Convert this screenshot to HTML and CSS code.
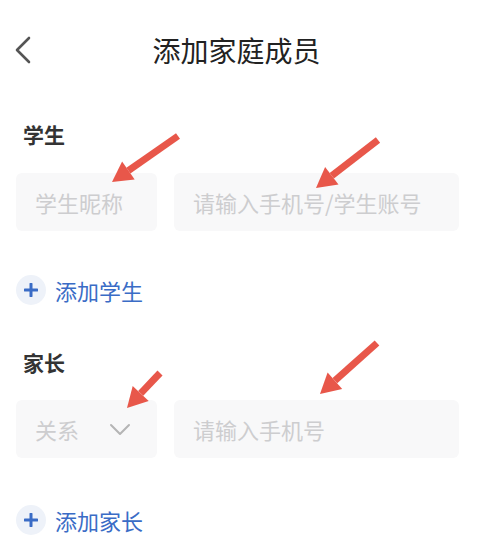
FILE: index.html
```
<!DOCTYPE html>
<html lang="zh-CN">
<head>
<meta charset="utf-8">
<title>添加家庭成员</title>
<link rel="stylesheet" href="styles.css">
</head>
<body>
<div class="page">
  <header class="header">
    <span class="back">
      <svg width="18" height="28" viewBox="0 0 18 28"><polyline points="15,2 3,14 15,26" fill="none" stroke="#555" stroke-width="2.6" stroke-linecap="round" stroke-linejoin="round"/></svg>
    </span>
    <h1 class="title">添加家庭成员</h1>
  </header>

  <section class="section">
    <h2 class="label">学生</h2>
    <div class="row">
      <input class="field field-short" type="text" placeholder="学生昵称">
      <input class="field field-long" type="text" placeholder="请输入手机号/学生账号">
    </div>
    <div class="add">
      <span class="add-icon"><svg width="14" height="14" viewBox="0 0 14 14"><path d="M7 1v12M1 7h12" stroke="#3a6cc6" stroke-width="3" stroke-linecap="round"/></svg></span>
      <span class="add-text">添加学生</span>
    </div>
  </section>

  <section class="section section-parent">
    <h2 class="label">家长</h2>
    <div class="row">
      <div class="field field-short select">
        <span class="ph">关系</span>
        <svg width="22" height="13" viewBox="0 0 22 13"><polyline points="2,2 11,11 20,2" fill="none" stroke="#b5b5b5" stroke-width="2" stroke-linecap="round" stroke-linejoin="round"/></svg>
      </div>
      <input class="field field-long" type="text" placeholder="请输入手机号">
    </div>
    <div class="add add-parent">
      <span class="add-icon"><svg width="14" height="14" viewBox="0 0 14 14"><path d="M7 1v12M1 7h12" stroke="#3a6cc6" stroke-width="3" stroke-linecap="round"/></svg></span>
      <span class="add-text">添加家长</span>
    </div>
  </section>

  <svg class="arrows" width="479" height="550" viewBox="0 0 479 550">
    <g stroke="#e8574a" stroke-width="7" fill="none">
      <line x1="178" y1="136" x2="128.4" y2="170.6"/>
      <line x1="378" y1="140" x2="331.8" y2="175.8"/>
      <line x1="160" y1="373" x2="140.7" y2="393.4"/>
      <line x1="377" y1="343" x2="334.9" y2="380.7"/>
    </g>
    <g fill="#e8574a">
      <polygon points="112,182 134.7,179.6 122.1,161.6"/>
      <polygon points="316,188 338.5,184.5 325.1,167.1"/>
      <polygon points="127,408 148.7,401 132.7,385.9"/>
      <polygon points="320,394 342.2,388.9 327.6,372.5"/>
    </g>
  </svg>
</div>
</body>
</html>
```
FILE: styles.css
```
* { box-sizing: border-box; }
html, body { margin: 0; padding: 0; background: #fff; }
body {
  font-family: "Noto Sans CJK SC", "Noto Sans", sans-serif;
  width: 479px;
  height: 550px;
  overflow: hidden;
}
.page { position: relative; height: 550px; }
.header {
  height: 100px;
  display: flex;
  align-items: center;
  justify-content: center;
  position: relative;
}
.back {
  position: absolute;
  left: 14px;
  top: 36px;
  display: flex;
}
.title {
  margin: 0;
  font-size: 28px;
  font-weight: 400;
  color: #222;
  line-height: 1;
  letter-spacing: 0;
  margin-right: 6px;
}
.section { padding: 0 20px 0 16px; }
.label {
  margin: 19px 0 0 7px;
  font-size: 21px;
  font-weight: 700;
  color: #333;
  line-height: 30px;
  height: 30px;
}
.section-parent .label { margin-top: 42px; }
.row {
  display: flex;
  gap: 17px;
  margin-top: 24px;
}
.section-parent .row { margin-top: 23px; }
.field {
  height: 58px;
  border: none;
  border-radius: 6px;
  background: #f8f8f9;
  font-family: inherit;
  font-size: 22px;
  color: #333;
  padding: 0 19px;
  outline: none;
}
.field::placeholder { color: #cdcdcf; }
.field-short { width: 141px; flex: none; }
.field-long { flex: 1; min-width: 0; }
.select {
  display: flex;
  align-items: center;
  justify-content: space-between;
  padding: 0 26px 0 19px;
}
.ph { color: #cdcdcf; font-size: 22px; }
.add {
  display: flex;
  align-items: center;
  gap: 9px;
  margin-top: 44px;
  height: 30px;
}
.add-parent { margin-top: 47px; }
.add-icon {
  width: 30px;
  height: 30px;
  border-radius: 50%;
  background: #eef2f9;
  display: flex;
  align-items: center;
  justify-content: center;
}
.add-text {
  font-size: 22px;
  color: #3a6cc6;
  line-height: 30px;
}
.arrows {
  position: absolute;
  left: 0;
  top: 0;
  pointer-events: none;
}
```
